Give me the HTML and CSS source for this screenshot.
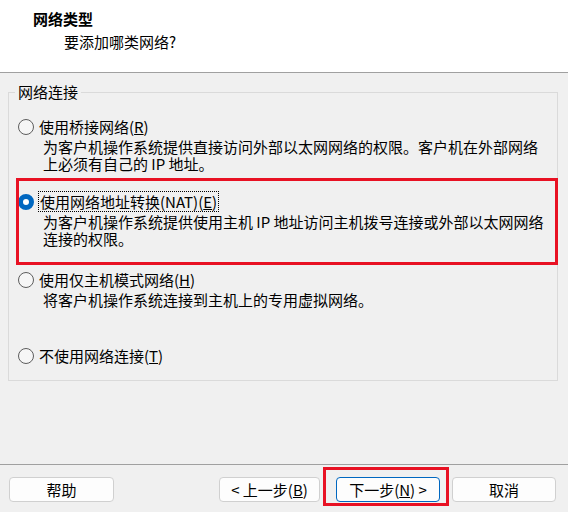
FILE: index.html
```html
<!DOCTYPE html>
<html>
<head>
  <meta charset="UTF-8">
  <title>新建虚拟机向导 - 网络类型</title>
  <link rel="stylesheet" href="styles.css">
</head>
<body>
<div class="dialog">
  <div class="header">
    <div class="title">网络类型</div>
    <div class="subtitle">要添加哪类网络?</div>
  </div>
  <div class="main">
    <div class="group">
      <span class="legend">网络连接</span>
      <div class="option opt-bridge">
        <div class="option-row"><span class="radio"></span><span class="label">使用桥接网络(<u>R</u>)</span></div>
        <div class="desc">为客户机操作系统提供直接访问外部以太网网络的权限。客户机在外部网络<br>上必须有自己的 IP 地址。</div>
      </div>
      <div class="option opt-nat">
        <div class="highlight"></div>
        <div class="option-row"><span class="radio checked"></span><span class="label focused">使用网络地址转换(NAT)(<u>E</u>)</span></div>
        <div class="desc">为客户机操作系统提供使用主机 IP 地址访问主机拨号连接或外部以太网网络<br>连接的权限。</div>
      </div>
      <div class="option opt-host">
        <div class="option-row"><span class="radio"></span><span class="label">使用仅主机模式网络(<u>H</u>)</span></div>
        <div class="desc">将客户机操作系统连接到主机上的专用虚拟网络。</div>
      </div>
      <div class="option opt-none">
        <div class="option-row"><span class="radio"></span><span class="label">不使用网络连接(<u>T</u>)</span></div>
      </div>
    </div>
  </div>
  <div class="footer">
    <button class="btn btn-help">帮助</button>
    <button class="btn btn-prev">&lt; 上一步(<u>B</u>)</button>
    <button class="btn btn-next">下一步(<u>N</u>) &gt;<span class="highlight"></span></button>
    <button class="btn btn-cancel">取消</button>
  </div>
</div>
</body>
</html>
```

FILE: styles.css
```css
body {
  margin: 0;
  font-family: "Noto Sans CJK SC", "Microsoft YaHei", sans-serif;
  font-size: 15px;
  line-height: 17px;
  color: #000;
  background: #f0f0f0;
}
.dialog {
  width: 568px;
  height: 512px;
  display: flex;
  flex-direction: column;
}
.header {
  height: 62px;
  padding-top: 10px;
  background: #fff;
  border-bottom: 1px solid #a0a0a0;
}
.header .title {
  padding-left: 33px;
  font-weight: bold;
}
.header .subtitle {
  margin-top: 6px;
  padding-left: 64px;
}
.main {
  flex: 1;
}
.group {
  position: relative;
  margin: 19px 0 0 8px;
  width: 539px;
  height: 262px;
  padding: 25px 0 0 9px;
  border: 1px solid #dadada;
}
.group .legend {
  position: absolute;
  top: -10px;
  left: 6px;
  padding: 0 3px;
  background: #f0f0f0;
}
.option {
  position: relative;
}
.opt-nat {
  margin-top: 21px;
}
.opt-host {
  margin-top: 24px;
}
.opt-none {
  margin-top: 39px;
}
.option-row {
  display: flex;
  align-items: center;
  height: 17px;
}
.radio {
  flex: none;
  width: 16px;
  height: 16px;
  box-sizing: border-box;
  border: 1px solid #5d5d5d;
  border-radius: 50%;
  background: #f6f6f6;
}
.radio.checked {
  border: 5px solid #0067c0;
  background: #fff;
}
.label {
  display: inline-block;
  margin-left: 5px;
  line-height: 17px;
}
.label.focused {
  margin-left: 6px;
  outline: 1px dotted #000;
  outline-offset: 1px;
}
.desc {
  margin-top: 3px;
  padding-left: 25px;
  white-space: nowrap;
}
.option .highlight {
  position: absolute;
  left: -2px;
  top: -15px;
  width: 542px;
  height: 87px;
  box-sizing: border-box;
  border: 3px solid #e81123;
}
.footer {
  height: 35px;
  padding: 12px 12px 0 9px;
  border-top: 1px solid #a0a0a0;
  display: flex;
  align-items: flex-start;
}
.btn {
  position: relative;
  height: 25px;
  box-sizing: border-box;
  padding: 0;
  border: 1px solid #d0d0d0;
  border-radius: 4px;
  background: #fdfdfd;
  font-family: inherit;
  font-size: 15px;
  line-height: 23px;
  color: #000;
  text-align: center;
}
.btn-help {
  width: 105px;
}
.btn-prev {
  width: 101px;
  margin-left: auto;
}
.btn-next {
  width: 104px;
  margin-left: 16px;
  border-color: #0067c0;
}
.btn-cancel {
  width: 104px;
  margin-left: 12px;
}
.btn-next .highlight {
  position: absolute;
  left: -14px;
  top: -11px;
  width: 126px;
  height: 39px;
  box-sizing: border-box;
  border: 3px solid #e81123;
}
```
